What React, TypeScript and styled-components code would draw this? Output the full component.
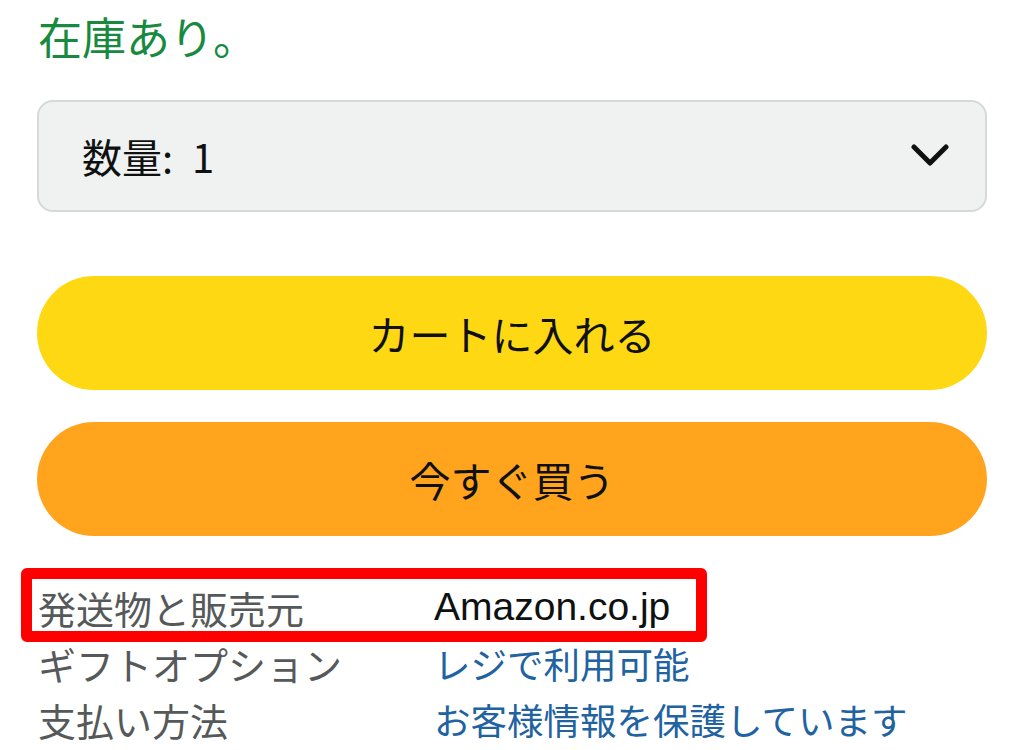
import styled, { createGlobalStyle } from "styled-components"

const GlobalStyle = createGlobalStyle`
  html, body {
    margin: 0;
    padding: 0;
    background: #ffffff;
  }
  body {
    font-family: "Liberation Sans", "Noto Sans CJK JP", sans-serif;
    color: #0f1111;
  }
`

const Page = styled.div`
  width: 1024px;
  height: 750px;
  overflow: hidden;
  box-sizing: border-box;
  padding: 8px 37px 0 37px;
  display: flex;
  flex-direction: column;
`

const Stock = styled.div`
  font-family: "Noto Sans CJK JP", sans-serif;
  font-size: 44px;
  line-height: 56px;
  color: #178a3f;
  padding-left: 1px;
`

const Select = styled.div`
  margin-top: 36px;
  height: 112px;
  box-sizing: border-box;
  background: #f0f2f2;
  border: 2px solid #d5d9d9;
  border-radius: 16px;
  display: flex;
  align-items: center;
  justify-content: space-between;
  padding: 0 36px 0 43px;
  font-family: "Noto Sans CJK JP", sans-serif;
  font-size: 40px;
  color: #0f1111;
`

const Qty = styled.span`
  word-spacing: 10px;
`

const Button = styled.button<{ $bg: string; $top: number }>`
  margin-top: ${(p) => p.$top}px;
  height: 114px;
  width: 100%;
  border: none;
  border-radius: 57px;
  background: ${(p) => p.$bg};
  font-family: "Noto Sans CJK JP", sans-serif;
  font-size: 41px;
  color: #0f1111;
  display: flex;
  align-items: center;
  justify-content: center;
  padding: 0;
`

const Rows = styled.div`
  margin-top: 43px;
  display: flex;
  flex-direction: column;
`

const Row = styled.div`
  position: relative;
  height: 56px;
  display: grid;
  grid-template-columns: 397px 1fr;
  align-items: center;
  font-family: "Noto Sans CJK JP", sans-serif;
`

const Label = styled.span`
  color: #565959;
  font-size: 38px;
  padding-left: 1px;
`

const Value = styled.span<{ $link?: boolean }>`
  color: ${(p) => (p.$link ? "#2162a1" : "#0f1111")};
  font-size: ${(p) => (p.$link ? "36.5px" : "39px")};
  font-family: ${(p) =>
    p.$link
      ? `"Noto Sans CJK JP", sans-serif`
      : `"Liberation Sans", "Noto Sans CJK JP", sans-serif`};
`

const Highlight = styled.div`
  position: absolute;
  left: -16px;
  top: -11px;
  width: 686px;
  height: 74px;
  box-sizing: border-box;
  border: 11px solid #ff0000;
  border-radius: 6px;
  pointer-events: none;
`

const Chevron = () => (
  <svg width="38" height="26" viewBox="0 0 38 26">
    <path
      d="M3 4 L19 20 L35 4"
      fill="none"
      stroke="#0f1111"
      strokeWidth="5"
      strokeLinecap="round"
      strokeLinejoin="round"
    />
  </svg>
)

export default function App() {
  return (
    <>
      <GlobalStyle />
      <Page>
        <Stock>在庫あり。</Stock>
        <Select>
          <Qty>数量: 1</Qty>
          <Chevron />
        </Select>
        <Button $bg="#ffd814" $top={64}>カートに入れる</Button>
        <Button $bg="#ffa41c" $top={32}>今すぐ買う</Button>
        <Rows>
          <Row>
            <Label>発送物と販売元</Label>
            <Value>Amazon.co.jp</Value>
            <Highlight />
          </Row>
          <Row>
            <Label>ギフトオプション</Label>
            <Value $link>レジで利用可能</Value>
          </Row>
          <Row>
            <Label>支払い方法</Label>
            <Value $link>お客様情報を保護しています</Value>
          </Row>
        </Rows>
      </Page>
    </>
  )
}
